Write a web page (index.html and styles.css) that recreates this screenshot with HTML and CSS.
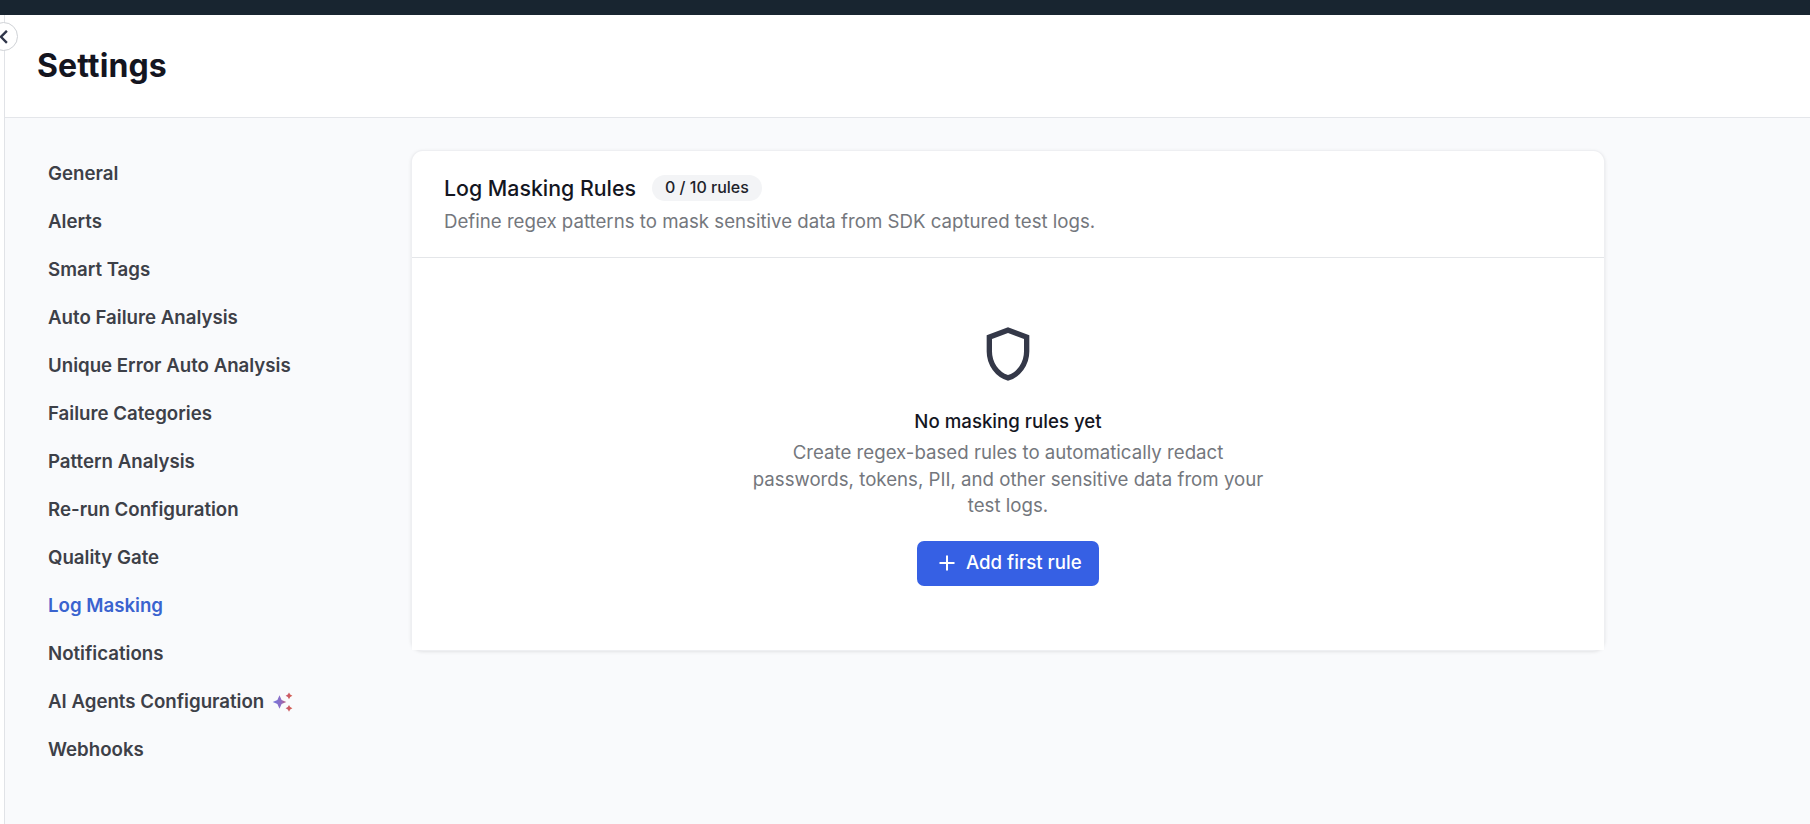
FILE: index.html
```html
<!DOCTYPE html>
<html lang="en">
<head>
<meta charset="utf-8">
<title>Settings</title>
<link rel="stylesheet" href="styles.css">
</head>
<body>
<div class="topbar"></div>
<div class="shell">
  <button class="collapse" aria-label="Collapse sidebar">
    <svg width="9" height="14" viewBox="0 0 9 14" fill="none" stroke="#30364a" stroke-width="2.4"><path d="M6.900.8.900 6.800l6 6"/></svg>
  </button>
  <div class="main">
    <header class="page-header"><h1 class="title">Settings</h1></header>
    <div class="content">
      <nav class="nav">
        <a class="nav-item">General</a>
        <a class="nav-item">Alerts</a>
        <a class="nav-item">Smart Tags</a>
        <a class="nav-item">Auto Failure Analysis</a>
        <a class="nav-item">Unique Error Auto Analysis</a>
        <a class="nav-item">Failure Categories</a>
        <a class="nav-item">Pattern Analysis</a>
        <a class="nav-item">Re-run Configuration</a>
        <a class="nav-item">Quality Gate</a>
        <a class="nav-item nav-item-active">Log Masking</a>
        <a class="nav-item">Notifications</a>
        <a class="nav-item">AI Agents Configuration
          <svg width="21" height="20" viewBox="0 0 21 20">
            <defs><linearGradient id="spark" x1="0" y1="0" x2="20" y2="0" gradientUnits="userSpaceOnUse"><stop offset="0" stop-color="#7079e0"/><stop offset=".45" stop-color="#8d6cc4"/><stop offset=".75" stop-color="#c9586c"/><stop offset="1" stop-color="#d4604f"/></linearGradient></defs>
            <path fill="url(#spark)" d="M7.500 3.200 9.600 7.900 14.300 10 9.600 12.100 7.500 16.800 5.400 12.100.7 10 5.400 7.900ZM17 .4l1.200 2.200 2.200 1.200-2.200 1.200L17 7.200 15.800 5 13.600 3.800l2.200-1.200ZM17 12.900l1.200 2.200 2.200 1.200-2.200 1.200L17 19.700l-1.200-2.200-2.200-1.200 2.200-1.200Z"/>
          </svg>
        </a>
        <a class="nav-item">Webhooks</a>
      </nav>
      <section class="card">
        <div class="card-header">
          <div class="card-heading">
            <h2 class="card-title">Log Masking Rules</h2>
            <span class="badge">0 / 10 rules</span>
          </div>
          <p class="card-text">Define regex patterns to mask sensitive data from SDK captured test logs.</p>
        </div>
        <div class="empty">
          <svg width="64" height="64" viewBox="0 0 24 24" fill="#343848"><path d="M12 22q-3.475-.875-5.738-3.988T4 11.100V5l8-3 8 3v6.100q0 3.800-2.262 6.912T12 22m0-2.100q2.600-.825 4.300-3.300t1.700-5.500V6.375l-6-2.250-6 2.250V11.100q0 3.025 1.700 5.500t4.300 3.300"/></svg>
          <h3 class="empty-title">No masking rules yet</h3>
          <p class="empty-text">Create regex-based rules to automatically redact passwords, tokens, PII, and other sensitive data from your test logs.</p>
          <button class="add">
            <svg class="plus" width="16" height="16" viewBox="0 0 16 16" fill="none" stroke="#fff" stroke-width="2"><path d="M8 .5v15M.5 8h15"/></svg>
            Add first rule
          </button>
        </div>
      </section>
    </div>
  </div>
</div>
</body>
</html>
```
FILE: styles.css
```css
* { box-sizing: border-box; }
body { margin: 0; height: 824px; overflow: hidden; display: flex; flex-direction: column; font-family: Inter, sans-serif; background: #fff; }
h1, h2, h3, p { margin: 0; }
.topbar { height: 15px; background: #182530; flex: none; }
.shell { flex: 1; position: relative; padding-left: 4px; display: flex; }
.main { flex: 1; border-left: 1px solid #e1e3e7; display: flex; flex-direction: column; }
.collapse { position: absolute; left: -11px; top: 7px; width: 29px; height: 29px; padding: 0 0 0 10px; border: 1px solid #cfd2d6; border-radius: 50%; background: #fff; display: flex; align-items: center; }
.page-header { height: 103px; padding: 32px 32px 0; border-bottom: 1px solid #e4e6ea; background: #fff; }
.title { font-size: 32px; line-height: 38px; font-weight: 700; letter-spacing: .08px; color: #14151f; }
.content { flex: 1; display: flex; align-items: flex-start; background: #f9fafc; padding: 33px 0 0 43px; }
.nav { width: 364px; flex: none; display: flex; flex-direction: column; }
.nav-item { height: 48px; display: flex; align-items: center; gap: 8px; font-size: 18.67px; font-weight: 600; color: #3d4048; white-space: nowrap; padding-bottom: 3px; }
.nav-item-active { color: #3a63cf; }
.card { width: 1192px; height: 499px; display: flex; flex-direction: column; background: #fff; border-radius: 11px; box-shadow: 0 0 0 1px #eeeff2, 0 1px 4px rgba(0, 0, 0, .15); }
.card-header { height: 107px; flex: none; border-bottom: 1px solid #e4e6e9; padding: 23px 32px 0; }
.card-heading { display: flex; align-items: center; gap: 16px; height: 28px; }
.card-title { font-size: 21.33px; line-height: 28px; font-weight: 500; color: #14161f; }
.badge { height: 26px; margin-bottom: 1px; padding: 0 13px; border-radius: 13px; background: #f3f4f6; font-size: 16px; line-height: 25px; font-weight: 500; color: #20222a; }
.card-text { margin-top: 6px; font-size: 18.67px; line-height: 27px; color: #74777d; }
.empty { flex: 1; background: #fff; display: flex; flex-direction: column; align-items: center; padding-top: 64px; }
.empty-title { margin-top: 22px; font-size: 18.67px; line-height: 27px; font-weight: 500; color: #14161f; }
.empty-text { margin-top: 5px; width: 520px; text-align: center; font-size: 18.67px; line-height: 26.67px; color: #74777d; }
.add { margin-top: 21px; width: 182px; height: 45px; border: 0; border-radius: 7px; background: #3660e4; color: #fff; font: 500 18.67px/27px Inter, sans-serif; display: flex; align-items: center; gap: 11px; padding: 0 0 2px 22px; white-space: nowrap; }
.plus { margin-top: 1px; }
```
